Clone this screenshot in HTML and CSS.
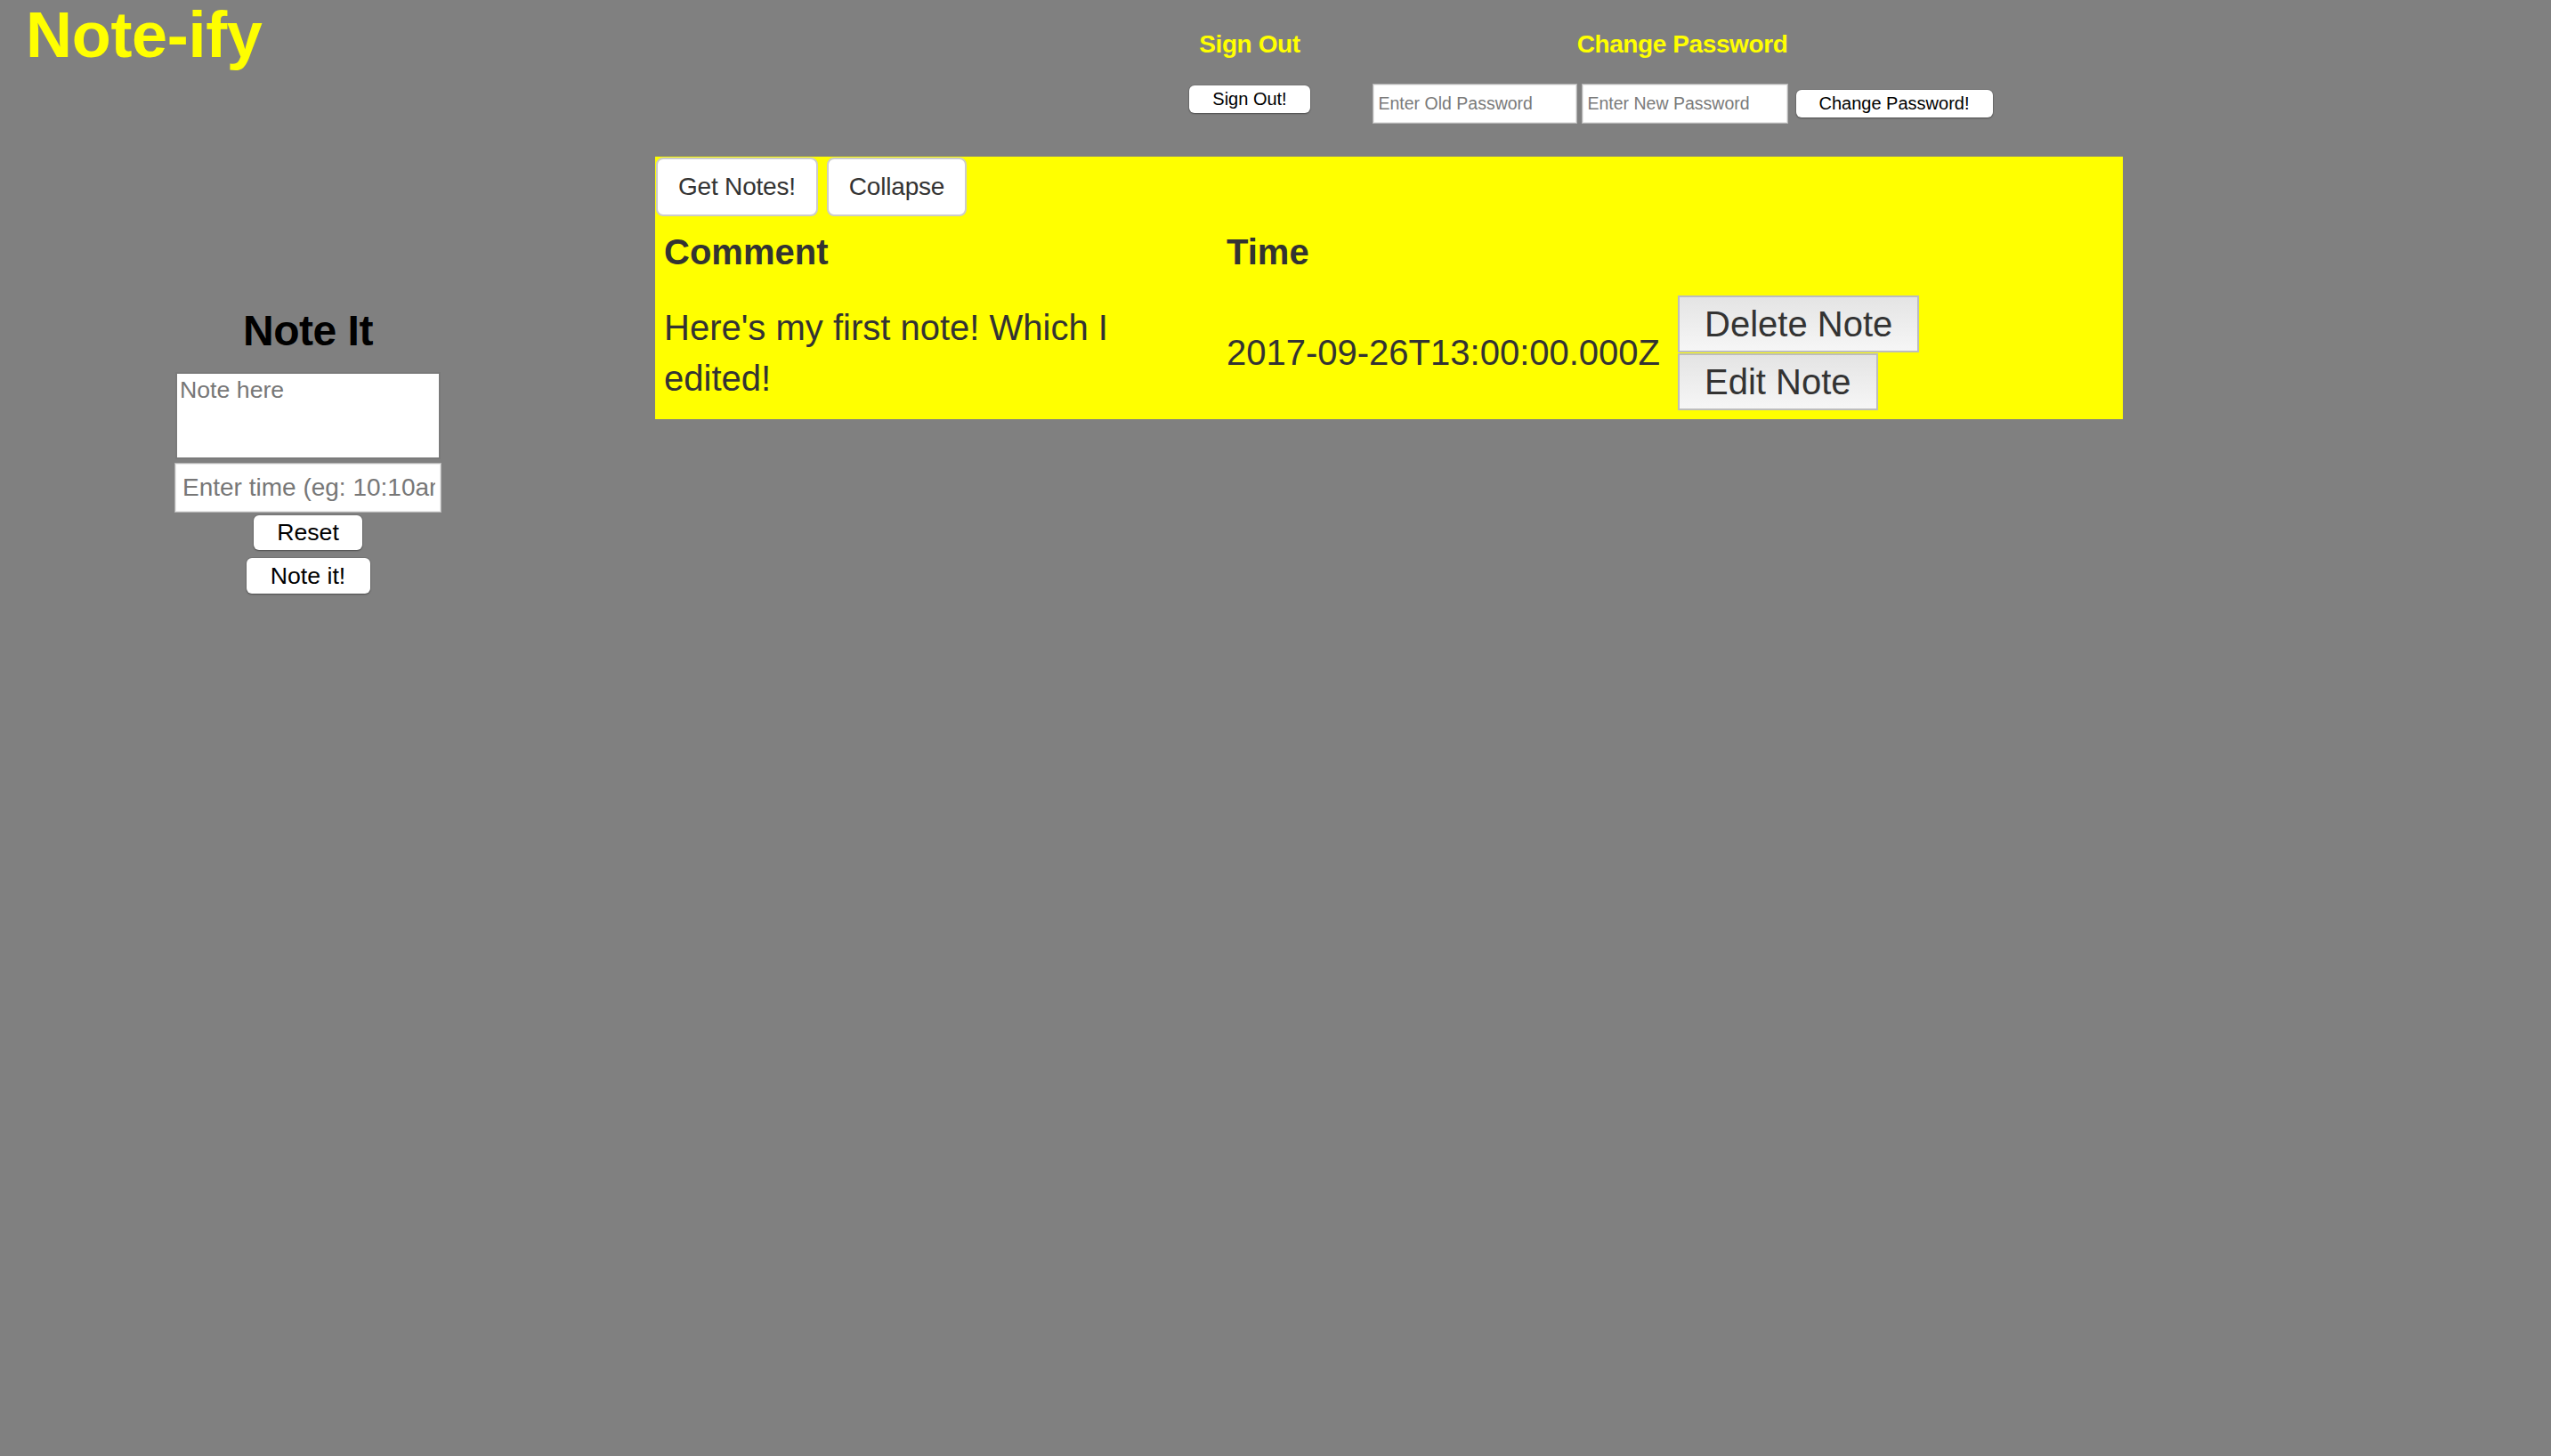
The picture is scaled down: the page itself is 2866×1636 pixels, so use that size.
FILE: index.html
```html
<!DOCTYPE html>
<html lang="en">
<head>
<meta charset="utf-8">
<title>Note-ify</title>
<link rel="stylesheet" href="styles.css">
</head>
<body>
<header class="header">
  <div class="brand">
    <h1 class="brand-title">Note-ify</h1>
  </div>
  <section class="auth-block auth-signout">
    <h5 class="auth-heading">Sign Out</h5>
    <button class="btn-plain btn-signout" type="button">Sign Out!</button>
  </section>
  <section class="auth-block auth-password">
    <h5 class="auth-heading">Change Password</h5>
    <form class="pw-row">
      <input class="pw-input" type="password" placeholder="Enter Old Password">
      <input class="pw-input pw-input-new" type="password" placeholder="Enter New Password">
      <button class="btn-plain btn-change" type="button">Change Password!</button>
    </form>
  </section>
</header>
<main class="main">
  <aside class="note-form">
    <h3 class="note-form-title">Note It</h3>
    <textarea class="note-text" placeholder="Note here"></textarea>
    <input class="note-time" type="text" placeholder="Enter time (eg: 10:10am)">
    <button class="btn-plain btn-reset" type="reset">Reset</button>
    <button class="btn-plain btn-noteit" type="submit">Note it!</button>
  </aside>
  <section class="notes-panel">
    <div class="notes-actions">
      <button class="btn-bs" type="button">Get Notes!</button>
      <button class="btn-bs" type="button">Collapse</button>
    </div>
    <table class="notes-table">
      <thead>
        <tr>
          <th class="col-comment">Comment</th>
          <th class="col-time">Time</th>
          <th></th>
        </tr>
      </thead>
      <tbody>
        <tr>
          <td class="col-comment">Here's my first note! Which I edited!</td>
          <td class="col-time">2017-09-26T13:00:00.000Z</td>
          <td class="col-actions">
            <button class="btn-grey" type="button">Delete Note</button>
            <button class="btn-grey" type="button">Edit Note</button>
          </td>
        </tr>
      </tbody>
    </table>
  </section>
</main>
</body>
</html>
```
FILE: styles.css
```css
* {
  box-sizing: border-box;
}

html, body {
  margin: 0;
  padding: 0;
}

body {
  background: #808080;
  font-family: "Liberation Sans", Arial, Helvetica, sans-serif;
  min-height: 1636px;
  color: #333;
}

/* ---------- Header ---------- */
.header {
  display: flex;
  align-items: flex-start;
  height: 176px;
}

.brand {
  flex: 0 0 1304px;
  padding-left: 29px;
}

.brand-title {
  margin: 0;
  font-size: 72px;
  line-height: 79px;
  font-weight: bold;
  letter-spacing: -0.3px;
  color: #ffff00;
}

.auth-block {
  text-align: center;
}

.auth-signout {
  flex: 0 0 200px;
}

.auth-password {
  flex: 0 0 772px;
}

.auth-heading {
  margin: 34px 0 0;
  font-size: 28px;
  line-height: 32px;
  font-weight: bold;
  letter-spacing: -0.4px;
  color: #ffff00;
}

.btn-plain {
  font-family: "Liberation Sans", Arial, Helvetica, sans-serif;
  background: #fff;
  color: #000;
  border: none;
  border-radius: 6px;
  box-shadow: 0 0 0 1px rgba(0, 0, 0, 0.08), 0 1px 2px rgba(0, 0, 0, 0.35);
  padding: 0;
  cursor: pointer;
}

.btn-signout {
  margin-top: 30px;
  width: 136px;
  height: 31px;
  font-size: 20px;
  line-height: 31px;
}

.pw-row {
  margin: 28px 0 0;
  display: flex;
  justify-content: center;
  align-items: center;
}

.pw-input {
  width: 230px;
  height: 45px;
  border: 1px solid #b4b4b4;
  box-shadow: inset 0 0 0 1px #e8e8e8;
  background: #fff;
  padding: 0 6px;
  font-family: "Liberation Sans", Arial, Helvetica, sans-serif;
  font-size: 19.5px;
  color: #333;
}

.pw-input-new {
  width: 232px;
  margin-left: 5px;
}

.pw-input::placeholder {
  color: #7a7a7a;
}

.btn-change {
  margin-left: 9px;
  width: 221px;
  height: 31px;
  font-size: 20px;
  line-height: 31px;
}

/* ---------- Main ---------- */
.main {
  display: flex;
  align-items: flex-start;
}

.note-form {
  flex: 0 0 692px;
  display: flex;
  flex-direction: column;
  align-items: center;
  padding-top: 169px;
}

.note-form-title {
  margin: 0 0 20px;
  font-size: 48px;
  line-height: 53px;
  font-weight: bold;
  letter-spacing: -0.5px;
  color: #000;
}

.note-text {
  display: block;
  width: 298px;
  height: 98px;
  margin: 0 0 4px;
  border: 2px solid #7a7a7a;
  padding: 3px 3px;
  font-family: "Liberation Sans", Arial, Helvetica, sans-serif;
  font-size: 26.7px;
  resize: none;
  background: #fff;
}

.note-text::placeholder,
.note-time::placeholder {
  color: #777;
}

.note-time {
  display: block;
  width: 300px;
  height: 56px;
  margin: 0;
  border: 1px solid #b4b4b4;
  box-shadow: inset 0 0 0 1px #e8e8e8;
  padding: 0 6px 0 8px;
  font-family: "Liberation Sans", Arial, Helvetica, sans-serif;
  font-size: 28px;
  background: #fff;
}

.btn-reset {
  margin-top: 3px;
  width: 122px;
  height: 39px;
  font-size: 26.7px;
  line-height: 39px;
}

.btn-noteit {
  margin-top: 9px;
  width: 139px;
  height: 40px;
  font-size: 26.7px;
  line-height: 40px;
}

/* ---------- Notes panel ---------- */
.notes-panel {
  flex: 0 0 1649px;
  margin-left: 44px;
  background: #ffff00;
  padding: 1px 0 0 1px;
}

.notes-actions {
  display: flex;
  gap: 10px;
}

.btn-bs {
  font-family: "Liberation Sans", Arial, Helvetica, sans-serif;
  background: #fff;
  color: #333;
  border: 2px solid #cccccc;
  border-radius: 8px;
  padding: 11px 23px;
  font-size: 28px;
  line-height: 40px;
  letter-spacing: -0.2px;
  cursor: pointer;
}

.notes-table {
  margin-top: 2px;
  border-collapse: collapse;
  font-size: 40px;
  line-height: 57px;
  color: #333;
}

.notes-table th,
.notes-table td {
  padding: 10px;
  vertical-align: middle;
  text-align: left;
}

.notes-table th {
  font-weight: bold;
}

.notes-table .col-comment {
  width: 631px;
  padding-left: 9px;
}

.col-time {
  white-space: nowrap;
}

.col-actions {
  display: flex;
  flex-direction: column;
  align-items: flex-start;
}

.btn-grey {
  font-family: "Liberation Sans", Arial, Helvetica, sans-serif;
  background: linear-gradient(#e4e4e4, #f6f6f6);
  color: #333;
  border: 2px solid #bdbdbd;
  border-radius: 0;
  padding: 7px 28px;
  font-size: 40px;
  line-height: 46px;
  cursor: pointer;
}

.btn-grey + .btn-grey {
  margin-top: 1px;
}
```
